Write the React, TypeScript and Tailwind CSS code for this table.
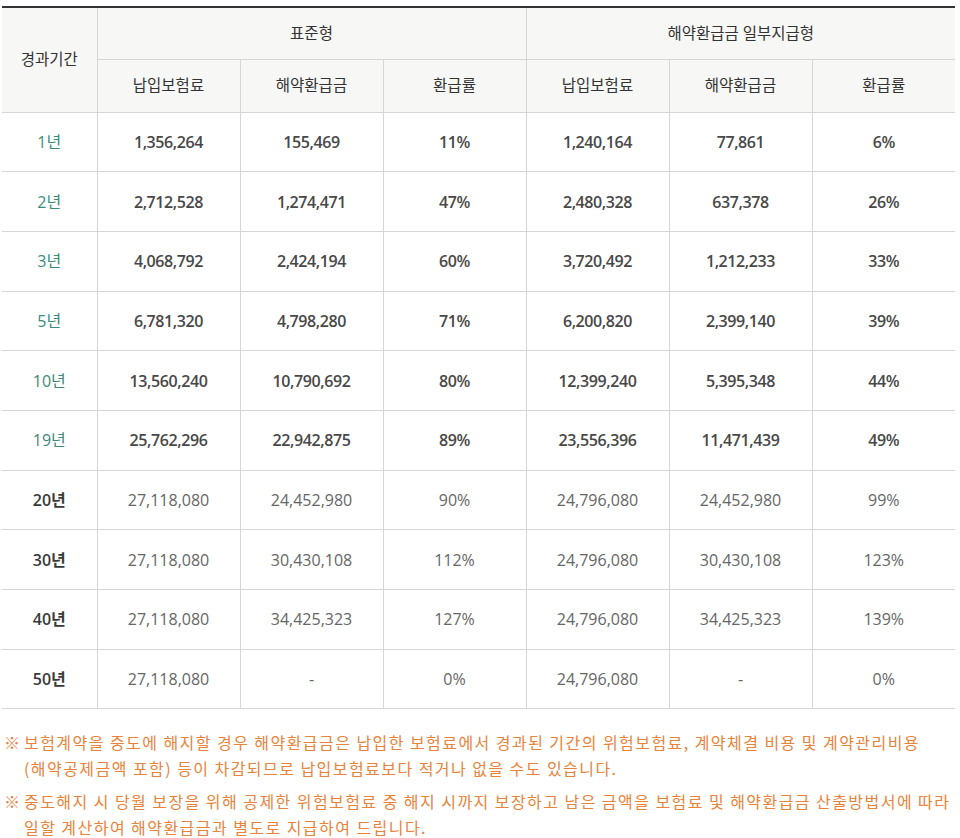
import React from "react";

type Row = { p: string; v: string[]; strong: boolean };

const rows: Row[] = [
  { p: "1년", v: ["1,356,264", "155,469", "11%", "1,240,164", "77,861", "6%"], strong: true },
  { p: "2년", v: ["2,712,528", "1,274,471", "47%", "2,480,328", "637,378", "26%"], strong: true },
  { p: "3년", v: ["4,068,792", "2,424,194", "60%", "3,720,492", "1,212,233", "33%"], strong: true },
  { p: "5년", v: ["6,781,320", "4,798,280", "71%", "6,200,820", "2,399,140", "39%"], strong: true },
  { p: "10년", v: ["13,560,240", "10,790,692", "80%", "12,399,240", "5,395,348", "44%"], strong: true },
  { p: "19년", v: ["25,762,296", "22,942,875", "89%", "23,556,396", "11,471,439", "49%"], strong: true },
  { p: "20년", v: ["27,118,080", "24,452,980", "90%", "24,796,080", "24,452,980", "99%"], strong: false },
  { p: "30년", v: ["27,118,080", "30,430,108", "112%", "24,796,080", "30,430,108", "123%"], strong: false },
  { p: "40년", v: ["27,118,080", "34,425,323", "127%", "24,796,080", "34,425,323", "139%"], strong: false },
  { p: "50년", v: ["27,118,080", "-", "0%", "24,796,080", "-", "0%"], strong: false },
];

const FONT = { fontFamily: '"Open Sans", "Noto Sans CJK KR", sans-serif' };

export default function App() {
  return (
    <div className="bg-white w-[960px] min-h-[838px] pt-[6px]" style={FONT}>
      <table className="ml-[2px] w-[953px] border-collapse table-fixed border-t-2 border-t-[#333]">
        <colgroup>
          <col className="w-[95px]" />
          <col className="w-[143px]" />
          <col className="w-[143px]" />
          <col className="w-[143px]" />
          <col className="w-[143px]" />
          <col className="w-[143px]" />
          <col className="w-[143px]" />
        </colgroup>
        <thead>
          <tr className="h-[52px] bg-[#f7f7f5]">
            <th rowSpan={2} className="font-normal text-[15.5px] text-[#333] border-r border-b border-[#d6d6d6]">
              경과기간
            </th>
            <th colSpan={3} className="font-normal text-[15.5px] text-[#333] border-r border-b border-[#d6d6d6]">
              표준형
            </th>
            <th colSpan={3} className="font-normal text-[15.5px] text-[#333] border-b border-[#d6d6d6]">
              해약환급금 일부지급형
            </th>
          </tr>
          <tr className="h-[53px] bg-[#f7f7f5]">
            {["납입보험료", "해약환급금", "환급률", "납입보험료", "해약환급금", "환급률"].map((h, i) => (
              <th
                key={i}
                className={
                  "font-normal text-[15.5px] text-[#333] border-b border-[#d6d6d6] " +
                  (i < 5 ? "border-r" : "")
                }
              >
                {h}
              </th>
            ))}
          </tr>
        </thead>
        <tbody>
          {rows.map((r, ri) => (
            <tr key={ri} className="h-[59.7px]">
              <td
                className={
                  "text-center text-[16px] border-r border-b border-[#d6d6d6] " +
                  (r.strong ? "text-[#3b8a7b] font-normal" : "text-[#3a3a3a] font-semibold")
                }
              >
                {r.p}
              </td>
              {r.v.map((v, i) => (
                <td
                  key={i}
                  className={
                    "text-center text-[16px] border-b border-[#d6d6d6] " +
                    (i < 5 ? "border-r " : "") +
                    (r.strong ? "text-[#484848] font-semibold tracking-[-0.4px]" : "text-[#666] font-normal")
                  }
                >
                  {v}
                </td>
              ))}
            </tr>
          ))}
        </tbody>
      </table>
      <div
        className="mt-[20px] text-[16px] leading-[26px] text-[#e8833a] whitespace-nowrap"
        style={{ fontFamily: '"Noto Sans CJK KR", sans-serif' }}
      >
        <div className="flex">
          <span className="w-[24px] shrink-0 pl-[4px]">※</span>
          <p className="tracking-[1.45px]">
            보험계약을 중도에 해지할 경우 해약환급금은 납입한 보험료에서 경과된 기간의 위험보험료, 계약체결 비용 및 계약관리비용
            <br />
            (해약공제금액 포함) 등이 차감되므로 납입보험료보다 적거나 없을 수도 있습니다.
          </p>
        </div>
        <div className="flex mt-[7px]">
          <span className="w-[24px] shrink-0 pl-[4px]">※</span>
          <p className="tracking-[1.45px]">
            중도해지 시 당월 보장을 위해 공제한 위험보험료 중 해지 시까지 보장하고 남은 금액을 보험료 및 해약환급금 산출방법서에 따라
            <br />
            일할 계산하여 해약환급금과 별도로 지급하여 드립니다.
          </p>
        </div>
      </div>
    </div>
  );
}
